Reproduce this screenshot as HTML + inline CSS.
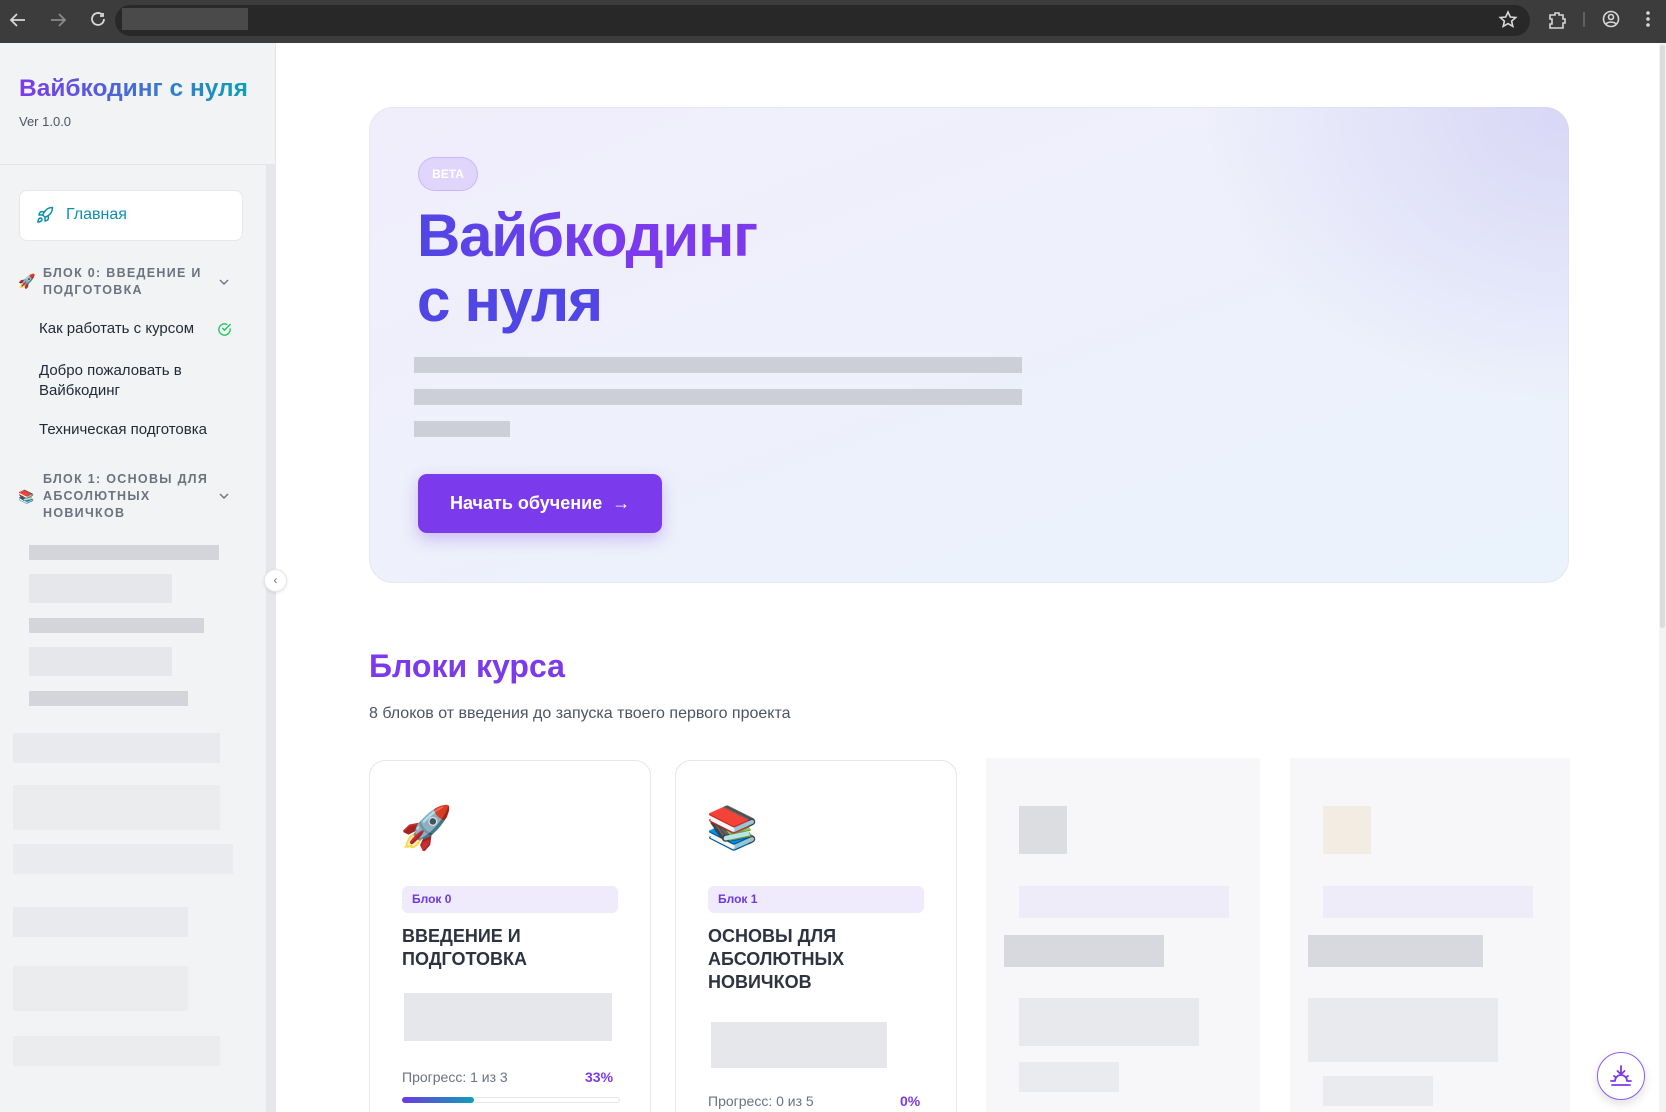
<!DOCTYPE html>
<html style="width:1666px;height:1112px;overflow:hidden"><head><meta charset="utf-8"><style>
*{box-sizing:border-box;margin:0;padding:0}
body{width:1666px;height:1112px;overflow:hidden;background:#fff;font-family:"Liberation Sans","Noto Sans CJK SC",sans-serif;position:relative}
.abs{position:absolute}
.top{left:0;top:0;width:1666px;height:43px;background:#3c3c3c}
.omni{left:115px;top:5px;width:1415px;height:31px;background:#282828;border-radius:16px}
.side{left:0;top:43px;width:276px;height:1069px;background:#f2f3f5;border-right:1px solid #e3e5e8}
.g{background:#d3d5db}
.gl{background:#e6e7ea}
.sbt{font-size:12.5px;font-weight:bold;letter-spacing:1.3px;color:#6b7280;line-height:17px}
.item{font-size:15px;color:#1f2937;left:39px}
.card{background:#fff;border:1px solid #e5e7eb;border-radius:16px;width:282px;height:380px;top:760px}
.badge{background:#efebfd;color:#6d3ae0;font-size:12px;font-weight:bold;border-radius:6px;height:27px;line-height:27px;padding-left:10px}
.ct{font-size:18px;font-weight:bold;color:#2d3340;line-height:23px}
.prog{font-size:14px;color:#6b7280}
.pct{font-size:14px;font-weight:bold;color:#7c3aed}
</style></head><body>
<div class="abs top"></div>
<div class="abs omni"></div>
<div class="abs" style="left:122px;top:8px;width:126px;height:22px;background:#4a4a4a"></div>
<svg class="abs" style="left:8px;top:10px" width="100" height="24" viewBox="0 0 100 24" fill="none" stroke="#d8d8d8" stroke-width="1.8"><path d="M17 10H4M9 4L3 10l6 6"/><path d="M43 10h13M51 4l6 6-6 6" stroke="#8a8a8a"/><path d="M96 9a6 6 0 1 1-2-4.5M95 3v3h-3"/></svg>
<svg class="abs" style="left:1498px;top:9px" width="160" height="26" fill="none" stroke="#d8d8d8" stroke-width="1.6"><path d="M10 3l2.3 5 5.4.5-4.1 3.6 1.2 5.3L10 14.6 5.2 17.4l1.2-5.3-4.1-3.6 5.4-.5z"/><path d="M52 6h5v-2h4v2h4v4h2v4h-2v5H52v-4h2v-5h-2z"/><line x1="86" y1="3" x2="86" y2="18" stroke="#6a6a6a"/><circle cx="113" cy="10" r="7.5"/><circle cx="113" cy="8" r="2.5"/><path d="M108 15c2-2.5 8-2.5 10 0"/><circle cx="150" cy="4" r="1" fill="#d8d8d8"/><circle cx="150" cy="10" r="1" fill="#d8d8d8"/><circle cx="150" cy="16" r="1" fill="#d8d8d8"/></svg>

<div class="abs side"></div>
<div class="abs" style="left:0;top:164px;width:276px;height:1px;background:#e3e5e8"></div>
<div class="abs" style="left:266px;top:165px;width:10px;height:947px;background:#e6e7ea"></div>
<div class="abs" style="left:19px;top:75px;font-size:24.5px;font-weight:bold;background:linear-gradient(90deg,#7c3aed,#0e9fb8);-webkit-background-clip:text;color:transparent">Вайбкодинг с нуля</div>
<div class="abs" style="left:19px;top:114px;font-size:13px;color:#4b5563">Ver 1.0.0</div>
<div class="abs" style="left:19px;top:190px;width:224px;height:51px;background:#fff;border:1px solid #e5e7eb;border-radius:8px"></div>
<svg class="abs" style="left:36px;top:206px" width="18" height="18" viewBox="0 0 24 24" fill="none" stroke="#0e8fb0" stroke-width="2" stroke-linecap="round" stroke-linejoin="round"><path d="M4.5 16.5c-1.5 1.3-2 5-2 5s3.7-.5 5-2c.7-.8.7-2.1-.1-2.9a2.2 2.2 0 0 0-2.9-.1z"/><path d="M12 15l-3-3a22 22 0 0 1 2-3.9A12.9 12.9 0 0 1 22 2c0 2.7-.8 7.5-6 11a22.4 22.4 0 0 1-4 2z"/><path d="M9 12H4s.6-3 2-4c1.6-1.1 5 0 5 0M12 15v5s3-.6 4-2c1.1-1.6 0-5 0-5"/></svg>
<div class="abs" style="left:66px;top:206px;font-size:16px;color:#0e8fb0">Главная</div>

<div class="abs" style="left:18px;top:273px;font-size:14px">🚀</div>
<div class="abs sbt" style="left:43px;top:265px">БЛОК 0: ВВЕДЕНИЕ И<br>ПОДГОТОВКА</div>
<svg class="abs" style="left:218px;top:278px" width="12" height="8" fill="none" stroke="#6b7280" stroke-width="1.4"><path d="M2 2l4 4 4-4"/></svg>
<div class="abs item" style="top:320px">Как работать с курсом</div>
<svg class="abs" style="left:217px;top:322px" width="15" height="15" viewBox="0 0 24 24" fill="none" stroke="#22c55e" stroke-width="2.2" stroke-linecap="round"><path d="M21 11.1V12a9 9 0 1 1-5.3-8.2"/><path d="M21 4L12 13l-3-3"/></svg>
<div class="abs item" style="top:361px;line-height:20px">Добро пожаловать в<br>Вайбкодинг</div>
<div class="abs item" style="top:421px">Техническая подготовка</div>
<div class="abs" style="left:18px;top:489px;font-size:13px">📚</div>
<div class="abs sbt" style="left:43px;top:471px">БЛОК 1: ОСНОВЫ ДЛЯ<br>АБСОЛЮТНЫХ<br>НОВИЧКОВ</div>
<svg class="abs" style="left:218px;top:492px" width="12" height="8" fill="none" stroke="#6b7280" stroke-width="1.4"><path d="M2 2l4 4 4-4"/></svg>

<div class="abs g" style="left:29px;top:545px;width:190px;height:15px"></div>
<div class="abs gl" style="left:29px;top:574px;width:143px;height:29px"></div>
<div class="abs g" style="left:29px;top:618px;width:175px;height:15px"></div>
<div class="abs gl" style="left:29px;top:647px;width:143px;height:29px"></div>
<div class="abs g" style="left:29px;top:691px;width:159px;height:15px"></div>
<div class="abs" style="left:13px;top:733px;width:207px;height:30px;background:#e9eaed"></div>
<div class="abs" style="left:13px;top:785px;width:207px;height:45px;background:#ebecee"></div>
<div class="abs" style="left:13px;top:844px;width:220px;height:30px;background:#eaebee"></div>
<div class="abs" style="left:13px;top:907px;width:175px;height:30px;background:#e9eaed"></div>
<div class="abs" style="left:13px;top:966px;width:175px;height:45px;background:#ebecee"></div>
<div class="abs" style="left:13px;top:1036px;width:207px;height:30px;background:#ebecee"></div>
<div class="abs" style="left:264px;top:569px;width:23px;height:23px;border-radius:50%;background:#fff;border:1px solid #e5e7eb;box-shadow:0 1px 3px rgba(0,0,0,.1);font-size:12px;color:#6b7280;text-align:center;line-height:20px">‹</div>

<div class="abs" style="left:1659px;top:43px;width:7px;height:1069px;background:#f3f3f3"></div>
<div class="abs" style="left:1660px;top:45px;width:5px;height:583px;background:#dcdcdc;border-radius:3px"></div>

<div class="abs" style="left:369px;top:107px;width:1200px;height:476px;border-radius:24px;border:1px solid #e6e7ef;background:linear-gradient(160deg,#f1eefc 0%,#eef0fb 45%,#eaf3fb 100%)"></div>
<div class="abs" style="left:1200px;top:107px;width:369px;height:300px;border-top-right-radius:24px;background:radial-gradient(ellipse at 100% 0%,rgba(210,208,245,.8),rgba(210,208,245,0) 70%)"></div>
<div class="abs" style="left:418px;top:157px;width:60px;height:34px;border-radius:17px;background:#e0d5fa;border:1px solid #c9b8f5;color:#fff;font-size:12px;font-weight:bold;text-align:center;line-height:32px">BETA</div>
<div class="abs" style="left:417px;top:203px;font-size:60px;font-weight:bold;line-height:65px;letter-spacing:-1.2px;background:linear-gradient(90deg,#4f46e5 0%,#7c3aed 60%);-webkit-background-clip:text;color:transparent">Вайбкодинг<br><span style="color:#4f46e5;-webkit-text-fill-color:#4f46e5">с нуля</span></div>
<div class="abs" style="left:414px;top:357px;width:608px;height:16px;background:#ccced8"></div>
<div class="abs" style="left:414px;top:389px;width:608px;height:16px;background:#ccced8"></div>
<div class="abs" style="left:414px;top:421px;width:96px;height:16px;background:#ccced8"></div>
<div class="abs" style="left:418px;top:474px;width:244px;height:59px;border-radius:9px;background:#7c3aed;box-shadow:0 6px 16px rgba(124,58,237,.3);color:#fff;font-size:18px;font-weight:bold;line-height:59px;padding-left:32px">Начать обучение &nbsp;→</div>

<div class="abs" style="left:369px;top:648px;font-size:32px;font-weight:bold;color:#7c3aed">Блоки курса</div>
<div class="abs" style="left:369px;top:705px;font-size:16px;color:#4b5563">8 блоков от введения до запуска твоего первого проекта</div>

<div class="abs card" style="left:369px"></div>
<div class="abs" style="left:400px;top:804px;font-size:42px">🚀</div>
<div class="abs badge" style="left:402px;top:886px;width:216px">Блок 0</div>
<div class="abs ct" style="left:402px;top:925px">ВВЕДЕНИЕ И<br>ПОДГОТОВКА</div>
<div class="abs gl" style="left:404px;top:993px;width:208px;height:48px"></div>
<div class="abs prog" style="left:402px;top:1069px">Прогресс: 1 из 3</div>
<div class="abs pct" style="left:585px;top:1069px">33%</div>
<div class="abs" style="left:402px;top:1097px;width:218px;height:6px;border-radius:3px;border:1px solid #e5e7eb"></div>
<div class="abs" style="left:402px;top:1097px;width:72px;height:6px;border-radius:3px;background:linear-gradient(90deg,#6d3ae0,#0e9fb8)"></div>

<div class="abs card" style="left:675px"></div>
<div class="abs" style="left:706px;top:804px;font-size:42px">📚</div>
<div class="abs badge" style="left:708px;top:886px;width:216px">Блок 1</div>
<div class="abs ct" style="left:708px;top:925px">ОСНОВЫ ДЛЯ<br>АБСОЛЮТНЫХ<br>НОВИЧКОВ</div>
<div class="abs gl" style="left:711px;top:1022px;width:176px;height:46px"></div>
<div class="abs prog" style="left:708px;top:1093px">Прогресс: 0 из 5</div>
<div class="abs pct" style="left:900px;top:1093px">0%</div>

<div class="abs" style="left:986px;top:758px;width:274px;height:354px;background:#f7f7f9"></div>
<div class="abs" style="left:1019px;top:806px;width:48px;height:48px;background:#dcdde0"></div>
<div class="abs" style="left:1019px;top:886px;width:210px;height:32px;background:#efecf9"></div>
<div class="abs" style="left:1004px;top:935px;width:160px;height:32px;background:#d8d9de"></div>
<div class="abs" style="left:1019px;top:998px;width:180px;height:48px;background:#e8e9ec"></div>
<div class="abs" style="left:1019px;top:1062px;width:100px;height:30px;background:#eaebee"></div>
<div class="abs" style="left:1290px;top:758px;width:280px;height:354px;background:#f7f7f9"></div>
<div class="abs" style="left:1323px;top:806px;width:48px;height:48px;background:#f3ece3"></div>
<div class="abs" style="left:1323px;top:886px;width:210px;height:32px;background:#efecf9"></div>
<div class="abs" style="left:1308px;top:935px;width:175px;height:32px;background:#d8d9de"></div>
<div class="abs" style="left:1308px;top:998px;width:190px;height:64px;background:#e9eaed"></div>
<div class="abs" style="left:1323px;top:1076px;width:110px;height:30px;background:#eaebee"></div>

<div class="abs" style="left:1597px;top:1052px;width:48px;height:48px;border-radius:50%;background:#fff;border:1.5px solid #8b5cf6;box-shadow:0 4px 10px rgba(0,0,0,.12)"></div>
<svg class="abs" style="left:1609px;top:1064px" width="24" height="24" viewBox="0 0 24 24" fill="none" stroke="#7c3aed" stroke-width="1.8" stroke-linecap="round"><path d="M12 2v8M8.5 7l3.5 3.5L15.5 7M6 17a6 6 0 0 1 12 0M2 17h3M19 17h3M3 21h18M5 12l1.5 1M19 12l-1.5 1"/></svg>
</body></html>
